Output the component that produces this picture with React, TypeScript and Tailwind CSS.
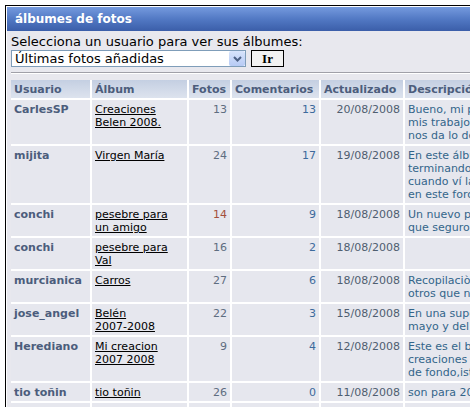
import React from 'react';

interface AlbumRow {
  user: string;
  album: string[];
  photos: number;
  photosRed?: boolean;
  comments: number;
  updated: string;
  desc: string[];
}

const rows: AlbumRow[] = [
  { user: 'CarlesSP', album: ['Creaciones', 'Belen 2008.'], photos: 13, comments: 13, updated: '20/08/2008', desc: ['Bueno, mi primer belén', 'mis trabajos de este año', 'nos da lo de siempre'] },
  { user: 'mijita', album: ['Virgen María'], photos: 24, comments: 17, updated: '19/08/2008', desc: ['En este álbum os muestro', 'terminando la virgen', 'cuando ví la foto', 'en este foro'] },
  { user: 'conchi', album: ['pesebre para', 'un amigo'], photos: 14, photosRed: true, comments: 9, updated: '18/08/2008', desc: ['Un nuevo pesebre', 'que seguro os gusta'] },
  { user: 'conchi', album: ['pesebre para', 'Val'], photos: 16, comments: 2, updated: '18/08/2008', desc: [] },
  { user: 'murcianica', album: ['Carros'], photos: 27, comments: 6, updated: '18/08/2008', desc: ['Recopilaciòn de carros', 'otros que no'] },
  { user: 'jose_angel', album: ['Belén', '2007-2008'], photos: 22, comments: 3, updated: '15/08/2008', desc: ['En una superficie de', 'mayo y del año'] },
  { user: 'Herediano', album: ['Mi creacion', '2007 2008'], photos: 9, comments: 4, updated: '12/08/2008', desc: ['Este es el belén', 'creaciones nuevas', 'de fondo,iste'] },
  { user: 'tio toñin', album: ['tio toñin'], photos: 26, comments: 0, updated: '11/08/2008', desc: ['son para 2008'] },
  { user: 'Pepe', album: ['Belén'], photos: 5, comments: 1, updated: '10/08/2008', desc: ['Mi belén'] },
];

const cell = 'border-r-2 border-b-2 border-white bg-[#e6e7ee] px-[3px] pt-[3px] pb-[2px] align-top leading-[13px]';
const head = 'border-r-2 border-b-2 border-white bg-gradient-to-b from-[#c4cfe2] to-[#dde3ee] px-[3px] pt-[3px] pb-[2px] text-left font-bold text-[#4c5d7c] leading-[13px]';

export default function App() {
  return (
    <div className="h-[407px] w-[470px] overflow-hidden bg-white pl-[5px] pt-[5px] font-['DejaVu_Sans',Verdana,sans-serif]">
      <div className="w-[700px] border border-black">
        <div className="border border-white">
          {/* title bar */}
          <div className="flex h-[24px] items-center bg-gradient-to-b from-[#759ade] via-[#5279c4] to-[#3b5ea9] pl-[8px] text-[12px] font-bold text-white">
            álbumes de fotos
          </div>

          <div className="bg-[#e8e8ee] px-[4px] pt-[3px]">
            <div className="h-[16px] text-[13px] leading-[16px] text-black">
              Selecciona un usuario para ver sus álbumes:
            </div>
            <div className="flex h-[17px] items-start gap-[5px]">
              <div className="relative h-[17px]">
                <select className="block h-[17px] w-[235px] appearance-none border border-[#7f9db9] bg-white py-0 pl-[3px] text-[13px] leading-[15px] text-black outline-none">
                  <option>Últimas fotos añadidas</option>
                </select>
                <div className="pointer-events-none absolute right-[1px] top-[1px] flex h-[15px] w-[16px] items-center justify-center rounded-[2px] bg-gradient-to-b from-[#d8e4fb] to-[#b7cbf5]">
                  <svg width="9" height="6" viewBox="0 0 9 6">
                    <path d="M1 1 L4.5 4.5 L8 1" stroke="#4d6185" strokeWidth="2" fill="none" />
                  </svg>
                </div>
              </div>
              <button className="block h-[17px] w-[33px] border border-black bg-[#f2f2f2] p-0 font-['Liberation_Serif',serif] text-[13px] font-bold leading-[15px] text-black">
                Ir
              </button>
            </div>
            <div className="mt-[5px] border-t border-b border-t-[#a0a0a8] border-b-white" />

            <table className="mt-[6px] table-fixed border-collapse text-[11px]">
              <colgroup>
                <col className="w-[80px]" />
                <col className="w-[97px]" />
                <col className="w-[43px]" />
                <col className="w-[89px]" />
                <col className="w-[84px]" />
                <col className="w-[250px]" />
              </colgroup>
              <thead>
                <tr>
                  <th className={head}>Usuario</th>
                  <th className={head}>Álbum</th>
                  <th className={head}>Fotos</th>
                  <th className={head}>Comentarios</th>
                  <th className={head}>Actualizado</th>
                  <th className={head}>Descripción</th>
                </tr>
              </thead>
              <tbody>
                {rows.map((r, i) => (
                  <tr key={i}>
                    <td className={`${cell} whitespace-nowrap font-bold text-[#4c5d7c]`}>{r.user}</td>
                    <td className={cell}>
                      {r.album.map((a, j) => (
                        <div key={j} className="whitespace-nowrap">
                          <a className="text-black underline">{a}</a>
                        </div>
                      ))}
                    </td>
                    <td className={`${cell} text-right ${r.photosRed ? 'text-[#a4503c]' : 'text-[#5e6d80]'}`}>{r.photos}</td>
                    <td className={`${cell} text-right text-[#3d6a9c]`}>{r.comments}</td>
                    <td className={`${cell} text-right text-[#4f5e70]`}>{r.updated}</td>
                    <td className={`${cell} text-[#33658a]`}>
                      {r.desc.map((d, j) => (
                        <div key={j} className="whitespace-nowrap">{d}</div>
                      ))}
                      {r.desc.length === 0 && <div>&nbsp;</div>}
                    </td>
                  </tr>
                ))}
              </tbody>
            </table>
          </div>
        </div>
      </div>
    </div>
  );
}
